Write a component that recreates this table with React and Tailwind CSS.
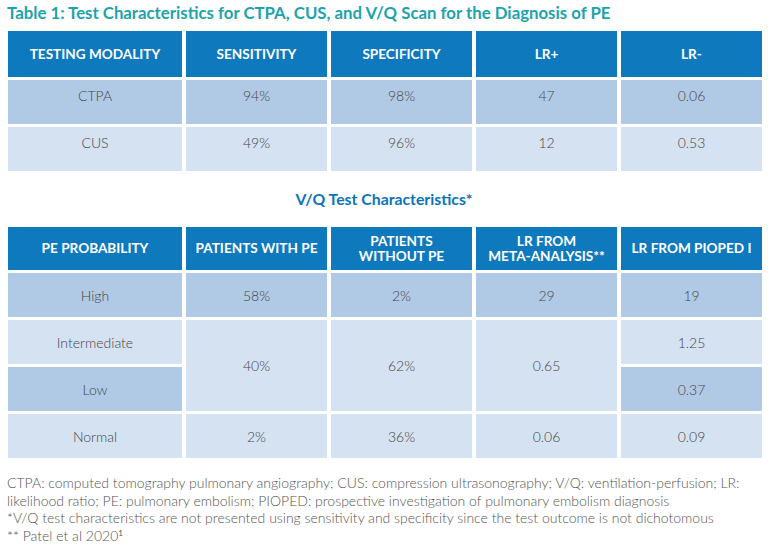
import React from "react";

const DARK = "bg-[#b0cae6]";
const LIGHT = "bg-[#d4e2f2]";

function H({ children, className = "" }) {
  return (
    <div
      className={`bg-[#0f79be] text-white font-bold text-[13.6px] leading-[15px] flex items-center justify-center text-center uppercase ${className}`}
    >
      {children}
    </div>
  );
}

function C({ children, dark, top, className = "" }) {
  return (
    <div
      className={`${dark ? DARK : LIGHT} text-[#454545] text-[14px] font-light flex justify-center ${
        top ? "items-start pt-[5px]" : "items-center"
      } ${className}`}
    >
      {children}
    </div>
  );
}

export default function App() {
  return (
    <div
      className="w-[768px] h-[560px] bg-white overflow-hidden"
      style={{ fontFamily: "Lato, 'Open Sans', sans-serif" }}
    >
      <div className="h-[31px] pl-[7px] pt-[2px] text-[16.8px] leading-[22px] font-bold text-[#1ca3ab] whitespace-nowrap">
        Table 1: Test Characteristics for CTPA, CUS, and V/Q Scan for the Diagnosis of PE
      </div>

      <div className="ml-[8px] grid grid-cols-[174px_141px_141px_141px_141px] gap-x-[4px] gap-y-[3px] grid-rows-[46px_44px_44px]">
        <H>Testing Modality</H>
        <H>Sensitivity</H>
        <H>Specificity</H>
        <H>LR+</H>
        <H>LR-</H>

        <C dark top>CTPA</C>
        <C dark top>94%</C>
        <C dark top>98%</C>
        <C dark top>47</C>
        <C dark top>0.06</C>

        <C top>CUS</C>
        <C top>49%</C>
        <C top>96%</C>
        <C top>12</C>
        <C top>0.53</C>
      </div>

      <div className="h-[56px] flex items-center justify-center text-[15.8px] font-bold text-[#0b74b9]">
        V/Q Test Characteristics*
      </div>

      <div className="ml-[8px] grid grid-cols-[174px_141px_141px_141px_141px] gap-x-[4px] gap-y-[3px] grid-rows-[43px_44px_44px_44px_44px]">
        <H>PE Probability</H>
        <H>Patients with PE</H>
        <H>
          Patients
          <br />
          without PE
        </H>
        <H>
          LR from
          <br />
          Meta-Analysis**
        </H>
        <H>LR from PIOPED I</H>

        <C dark>High</C>
        <C dark>58%</C>
        <C dark>2%</C>
        <C dark>29</C>
        <C dark>19</C>

        <C className="col-start-1 row-start-3">Intermediate</C>
        <C className="col-start-2 row-start-3 row-span-2">40%</C>
        <C className="col-start-3 row-start-3 row-span-2">62%</C>
        <C className="col-start-4 row-start-3 row-span-2">0.65</C>
        <C className="col-start-5 row-start-3">1.25</C>
        <C dark className="col-start-1 row-start-4">Low</C>
        <C dark className="col-start-5 row-start-4">0.37</C>

        <C>Normal</C>
        <C>2%</C>
        <C>36%</C>
        <C>0.06</C>
        <C>0.09</C>
      </div>

      <div className="mt-[16px] pl-[7px] pr-[2px] text-[14px] leading-[17.5px] font-light text-[#555]">
        <div className="whitespace-nowrap">
          CTPA: computed tomography pulmonary angiography; CUS: compression ultrasonography; V/Q: ventilation-perfusion; LR:
        </div>
        <div className="whitespace-nowrap">
          likelihood ratio; PE: pulmonary embolism; PIOPED: prospective investigation of pulmonary embolism diagnosis
        </div>
        <div className="whitespace-nowrap">
          *V/Q test characteristics are not presented using sensitivity and specificity since the test outcome is not dichotomous
        </div>
        <div className="whitespace-nowrap">
          ** Patel et al 2020<span className="relative -top-[5px] text-[8px] font-normal">1</span>
        </div>
      </div>
    </div>
  );
}
